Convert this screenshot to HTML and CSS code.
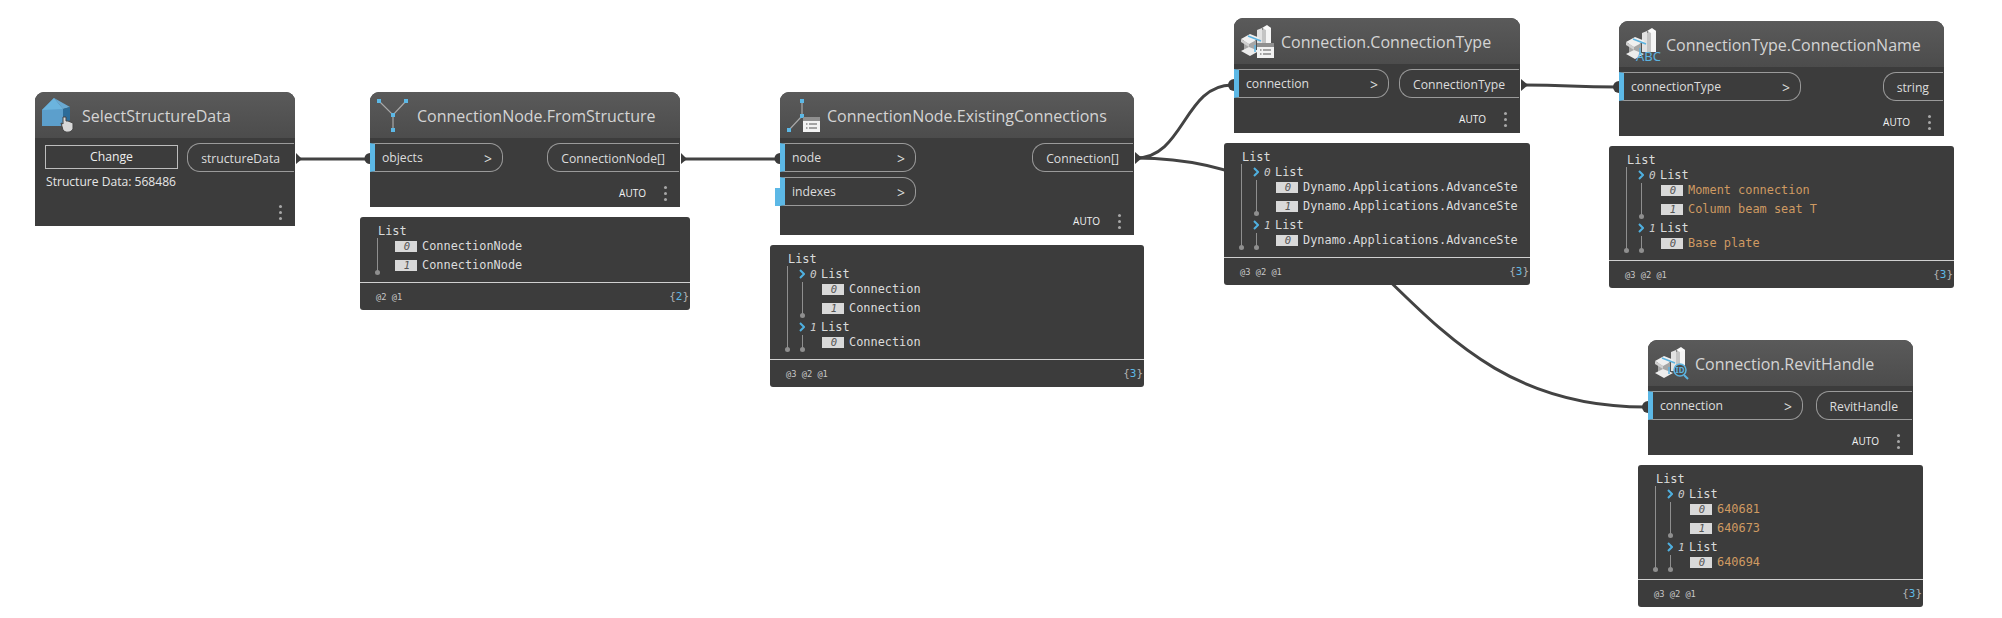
FILE: index.html
```html
<!DOCTYPE html>
<html lang="en">
<head>
    <meta charset="UTF-8">
    <title>Dynamo graph</title>
    <link rel="stylesheet" href="styles.css">
</head>
<body>
<div class="canvas">
    <!-- Shared icon parts -->
    <svg class="defs" width="0" height="0">
        <defs>
            <g id="beam">
                <polygon points="26,13 33,9 33,31 26,31" fill="#c4c4c4"/>
                <polygon points="32,8 37,10 37,31 32,31" fill="#f5f5f5"/>
                <polygon points="23,12 28,10 28,31 23,31" fill="#e2e2e2"/>
                <polygon points="28,10 33,7 37,10 32,12" fill="#fafafa"/>
                <polygon points="10,23 22,23 22,34 10,34" fill="#a6a6a6"/>
                <polygon points="7,21 16,16 26,20 15,26" fill="#f0f0f0"/>
                <polygon points="7,21 15,26 15,29 7,24" fill="#cfcfcf"/>
                <polygon points="7,33 15,29 25,33 16,38" fill="#ececec"/>
                <path d="M14 18 L27 23" stroke="#5cb3e0" stroke-width="1.5" fill="none"/>
                <path d="M21 27 L21 34" stroke="#5cb3e0" stroke-width="1.5" fill="none"/>
            </g>
            <g id="card">
                <rect x="0" y="0" width="17" height="15" fill="#f2f2f2"/>
                <rect x="0" y="0" width="17" height="4" fill="#8f8f8f"/>
                <path d="M3 7 h1.5 M6 7 h8 M3 11 h1.5 M6 11 h8" stroke="#555" stroke-width="1"/>
            </g>
        </defs>
    </svg>

    <!-- Wires sit behind the nodes -->
    <svg class="wires" width="2002" height="618" viewBox="0 0 2002 618">
        <g fill="none" stroke="#434343" stroke-width="3">
            <path d="M297 159 L368 159"/>
            <path d="M682 159 L778 159"/>
            <path d="M1136 158 C1184 158 1184 85 1232 85"/>
            <path d="M1136 158 C1391 158 1391 407 1646 407"/>
            <path d="M1522 85 C1570 85 1570 87 1617 87"/>
        </g>
        <g fill="#3c3c3c">
            <path d="M296 153 L302 159 L296 164 Z"/>
            <path d="M681 153 L687 159 L681 164 Z"/>
            <path d="M1135 152 L1142 158 L1135 164 Z"/>
            <path d="M1521 79 L1528 85 L1521 91 Z"/>
            <path d="M370 153 A5.5 5.5 0 0 0 370 164 Z"/>
            <path d="M780 153 A5.5 5.5 0 0 0 780 164 Z"/>
            <path d="M1234 79 A5.5 5.5 0 0 0 1234 91 Z"/>
            <path d="M1619 81 A5.5 5.5 0 0 0 1619 93 Z"/>
            <path d="M1648 401 A5.5 5.5 0 0 0 1648 413 Z"/>
        </g>
    </svg>

    <section class="node node-select">
        <header class="node-head">
            <svg class="node-icon" viewBox="0 0 47 46">
                <polygon points="7,18 19,6 28,17 28,34 7,34" fill="#5c9fcc"/>
                <polygon points="7,18 19,6 28,17" fill="#6bb4de"/>
                <polygon points="19,6 35,15 28,17" fill="#69a9d2"/>
                <polygon points="28,17 35,15 35,28 28,34" fill="#2c6c99"/>
                <path d="M28 25 L28 32 L26 31 L28 38 C30 41 36 41 38 37 L38 31 L33 29 L31 29 L31 25 Z" fill="#d8d8d8" stroke="#444" stroke-width="1"/>
            </svg>
            <h2 class="node-title">SelectStructureData</h2>
        </header>
        <div class="node-body">
            <div class="select-controls">
                <div class="change-btn">Change</div>
                <div class="select-status">Structure Data: 568486</div>
            </div>
            <div class="port-out">structureData</div>
        </div>
        <footer class="node-foot"><span class="dots"></span></footer>
    </section>

    <section class="node node-from">
        <header class="node-head">
            <svg class="node-icon" viewBox="0 0 47 46">
                <path d="M9 9 L23 23 L36 9 M23 23 L23 38" stroke="#a8a8a8" stroke-width="1.2" fill="none"/>
                <rect x="7" y="7" width="4" height="4" fill="#5cb8e6"/>
                <rect x="34" y="7" width="4" height="4" fill="#5cb8e6"/>
                <rect x="21" y="21" width="4" height="4" fill="#5cb8e6"/>
                <rect x="21" y="36" width="4" height="4" fill="#5cb8e6"/>
            </svg>
            <h2 class="node-title">ConnectionNode.FromStructure</h2>
        </header>
        <div class="node-body">
            <div class="inputs">
                <div class="port-in"><span>objects</span><b>&gt;</b></div>
            </div>
            <div class="port-out">ConnectionNode[]</div>
        </div>
        <footer class="node-foot"><span class="auto">AUTO</span><span class="dots"></span></footer>
    </section>

    <div class="preview preview-from">
        <div class="tree">
            <div class="tree-head">List</div>
            <div class="item"><span class="badge">0</span>ConnectionNode</div>
            <div class="item"><span class="badge">1</span>ConnectionNode</div>
        </div>
        <div class="preview-foot"><span>@2 @1</span><span class="count">{<i>2</i>}</span></div>
    </div>

    <section class="node node-existing">
        <header class="node-head">
            <svg class="node-icon" viewBox="0 0 47 46">
                <path d="M22 9 L22 24 L9 38" stroke="#a8a8a8" stroke-width="1.2" fill="none"/>
                <rect x="20" y="7" width="4" height="4" fill="#5cb8e6"/>
                <rect x="20" y="22" width="4" height="4" fill="#5cb8e6"/>
                <rect x="7" y="36" width="4" height="4" fill="#5cb8e6"/>
                <use href="#card" x="23" y="25"/>
            </svg>
            <h2 class="node-title">ConnectionNode.ExistingConnections</h2>
        </header>
        <div class="node-body">
            <div class="inputs">
                <div class="port-in"><span>node</span><b>&gt;</b></div>
                <div class="port-in port-default"><span>indexes</span><b>&gt;</b></div>
            </div>
            <div class="port-out">Connection[]</div>
        </div>
        <footer class="node-foot"><span class="auto">AUTO</span><span class="dots"></span></footer>
    </section>

    <div class="preview preview-existing">
        <div class="tree">
            <div class="tree-head">List</div>
            <div class="sublist">
                <div class="sub-head"><svg class="chevron" viewBox="0 0 6 10"><path d="M1 1 L5 5 L1 9" /></svg><em>0</em>List</div>
                <div class="item"><span class="badge">0</span>Connection</div>
                <div class="item"><span class="badge">1</span>Connection</div>
            </div>
            <div class="sublist">
                <div class="sub-head"><svg class="chevron" viewBox="0 0 6 10"><path d="M1 1 L5 5 L1 9" /></svg><em>1</em>List</div>
                <div class="item"><span class="badge">0</span>Connection</div>
            </div>
        </div>
        <div class="preview-foot"><span>@3 @2 @1</span><span class="count">{<i>3</i>}</span></div>
    </div>

    <section class="node node-type">
        <header class="node-head">
            <svg class="node-icon" viewBox="0 0 47 46">
                <use href="#beam"/>
                <use href="#card" x="23" y="25"/>
            </svg>
            <h2 class="node-title">Connection.ConnectionType</h2>
        </header>
        <div class="node-body">
            <div class="inputs">
                <div class="port-in"><span>connection</span><b>&gt;</b></div>
            </div>
            <div class="port-out">ConnectionType</div>
        </div>
        <footer class="node-foot"><span class="auto">AUTO</span><span class="dots"></span></footer>
    </section>

    <div class="preview preview-type">
        <div class="tree">
            <div class="tree-head">List</div>
            <div class="sublist">
                <div class="sub-head"><svg class="chevron" viewBox="0 0 6 10"><path d="M1 1 L5 5 L1 9" /></svg><em>0</em>List</div>
                <div class="item"><span class="badge">0</span>Dynamo.Applications.AdvanceSte</div>
                <div class="item"><span class="badge">1</span>Dynamo.Applications.AdvanceSte</div>
            </div>
            <div class="sublist">
                <div class="sub-head"><svg class="chevron" viewBox="0 0 6 10"><path d="M1 1 L5 5 L1 9" /></svg><em>1</em>List</div>
                <div class="item"><span class="badge">0</span>Dynamo.Applications.AdvanceSte</div>
            </div>
        </div>
        <div class="preview-foot"><span>@3 @2 @1</span><span class="count">{<i>3</i>}</span></div>
    </div>

    <section class="node node-name">
        <header class="node-head">
            <svg class="node-icon" viewBox="0 0 47 46">
                <use href="#beam"/>
                <text class="icon-abc" x="17" y="40">ABC</text>
            </svg>
            <h2 class="node-title">ConnectionType.ConnectionName</h2>
        </header>
        <div class="node-body">
            <div class="inputs">
                <div class="port-in"><span>connectionType</span><b>&gt;</b></div>
            </div>
            <div class="port-out">string</div>
        </div>
        <footer class="node-foot"><span class="auto">AUTO</span><span class="dots"></span></footer>
    </section>

    <div class="preview preview-name">
        <div class="tree">
            <div class="tree-head">List</div>
            <div class="sublist">
                <div class="sub-head"><svg class="chevron" viewBox="0 0 6 10"><path d="M1 1 L5 5 L1 9" /></svg><em>0</em>List</div>
                <div class="item value"><span class="badge">0</span>Moment connection</div>
                <div class="item value"><span class="badge">1</span>Column beam seat T</div>
            </div>
            <div class="sublist">
                <div class="sub-head"><svg class="chevron" viewBox="0 0 6 10"><path d="M1 1 L5 5 L1 9" /></svg><em>1</em>List</div>
                <div class="item value"><span class="badge">0</span>Base plate</div>
            </div>
        </div>
        <div class="preview-foot"><span>@3 @2 @1</span><span class="count">{<i>3</i>}</span></div>
    </div>

    <section class="node node-handle">
        <header class="node-head">
            <svg class="node-icon" viewBox="0 0 47 46">
                <use href="#beam"/>
                <circle cx="32" cy="30" r="6" fill="#4c4c4c" stroke="#5cb3e0" stroke-width="1.5"/>
                <path d="M36 35 L40 39" stroke="#5cb3e0" stroke-width="2"/>
                <text class="icon-id" x="32" y="33">ID</text>
            </svg>
            <h2 class="node-title">Connection.RevitHandle</h2>
        </header>
        <div class="node-body">
            <div class="inputs">
                <div class="port-in"><span>connection</span><b>&gt;</b></div>
            </div>
            <div class="port-out">RevitHandle</div>
        </div>
        <footer class="node-foot"><span class="auto">AUTO</span><span class="dots"></span></footer>
    </section>

    <div class="preview preview-handle">
        <div class="tree">
            <div class="tree-head">List</div>
            <div class="sublist">
                <div class="sub-head"><svg class="chevron" viewBox="0 0 6 10"><path d="M1 1 L5 5 L1 9" /></svg><em>0</em>List</div>
                <div class="item value"><span class="badge">0</span>640681</div>
                <div class="item value"><span class="badge">1</span>640673</div>
            </div>
            <div class="sublist">
                <div class="sub-head"><svg class="chevron" viewBox="0 0 6 10"><path d="M1 1 L5 5 L1 9" /></svg><em>1</em>List</div>
                <div class="item value"><span class="badge">0</span>640694</div>
            </div>
        </div>
        <div class="preview-foot"><span>@3 @2 @1</span><span class="count">{<i>3</i>}</span></div>
    </div>
</div>
</body>
</html>
```

FILE: styles.css
```css
* {
    box-sizing: border-box;
}
html, body {
    margin: 0;
    background: #fff;
}
.canvas {
    position: relative;
    width: 2002px;
    height: 618px;
    overflow: hidden;
    font-family: "Open Sans", "Noto Sans", sans-serif;
}
.defs, .wires {
    position: absolute;
    left: 0;
    top: 0;
}

/* Nodes are placed on the free canvas */
.node {
    position: absolute;
    display: flex;
    flex-direction: column;
    background: #3c3c3c;
    border-radius: 9px 9px 0 0;
    color: #ddd;
}
.node-select   { left: 35px;   top: 92px;  width: 260px; height: 134px; }
.node-from     { left: 370px;  top: 92px;  width: 310px; height: 115px; }
.node-existing { left: 780px;  top: 92px;  width: 354px; height: 143px; }
.node-type     { left: 1234px; top: 18px;  width: 286px; height: 115px; }
.node-name     { left: 1619px; top: 21px;  width: 325px; height: 115px; }
.node-handle   { left: 1648px; top: 340px; width: 265px; height: 115px; }

.node-from .port-in     { width: 133px; }
.node-existing .port-in { width: 136px; }
.node-type .port-in     { width: 155px; }
.node-name .port-in     { width: 182px; }
.node-handle .port-in   { width: 155px; }

.node-head {
    display: flex;
    align-items: center;
    height: 46px;
    flex: none;
    background: linear-gradient(#5a5a5a, #4c4c4c);
    border-radius: 9px 9px 0 0;
}
.node-icon {
    width: 47px;
    height: 46px;
    flex: none;
}
.node-title {
    margin: 0;
    padding-top: 2px;
    font-size: 16px;
    font-weight: 400;
    color: #d4d4d4;
    white-space: nowrap;
}
.icon-abc {
    font-family: "Noto Sans", sans-serif;
    font-size: 13px;
    fill: #5cb3e0;
}
.icon-id {
    font-family: "Noto Sans", sans-serif;
    font-size: 8px;
    font-weight: 700;
    fill: #5cb3e0;
    text-anchor: middle;
}

.node-body {
    display: flex;
    justify-content: space-between;
    align-items: flex-start;
    padding: 5px 1px 0 0;
    font-size: 12.2px;
}
.inputs {
    display: flex;
    flex-direction: column;
    gap: 5px;
}
.port-in {
    position: relative;
    display: flex;
    justify-content: space-between;
    align-items: center;
    height: 29px;
    padding: 0 10px 0 7px;
    border: 1px solid #9a9a9a;
    border-left: 5px solid #5cb8e6;
    border-radius: 0 13px 13px 0;
}
.port-in b {
    font-weight: 400;
    font-size: 14px;
    padding-top: 2px;
}
.port-default::before {
    content: "";
    position: absolute;
    left: -10px;
    bottom: -1px;
    width: 5px;
    height: 18px;
    background: #5cb8e6;
}
.port-out {
    display: flex;
    align-items: center;
    height: 29px;
    padding: 1px 14px 0 13px;
    border: 1px solid #9a9a9a;
    border-right: none;
    border-radius: 13px 0 0 13px;
    white-space: nowrap;
}
.node-foot {
    display: flex;
    justify-content: flex-end;
    align-items: center;
    gap: 18px;
    height: 28px;
    margin-top: auto;
    padding-right: 13px;
    flex: none;
}
.auto {
    font-size: 10px;
    color: #f2f2f2;
}
.dots {
    width: 3px;
    height: 3px;
    border-radius: 50%;
    background: #a8a8a8;
    box-shadow: 0 -6px 0 #a8a8a8, 0 6px 0 #a8a8a8;
}

/* Node 1 controls */
.select-controls {
    padding: 2px 0 0 10px;
}
.change-btn {
    width: 133px;
    height: 24px;
    line-height: 22px;
    text-align: center;
    border: 1px solid #bdbdbd;
    color: #eee;
}
.select-status {
    margin-top: 4px;
    padding-left: 1px;
    font-size: 12.1px;
    color: #e6e6e6;
    white-space: nowrap;
}

/* Watch previews under the nodes */
.preview {
    position: absolute;
    display: flex;
    flex-direction: column;
    background: #3c3c3c;
    border-radius: 3px;
    color: #dcdcdc;
    font-family: "DejaVu Sans Mono", "Liberation Mono", monospace;
    font-size: 11.9px;
}
.preview-from     { left: 360px;  top: 217px; width: 330px; height: 93px; }
.preview-existing { left: 770px;  top: 245px; width: 374px; height: 142px; }
.preview-type     { left: 1224px; top: 143px; width: 306px; height: 142px; }
.preview-name     { left: 1609px; top: 146px; width: 345px; height: 142px; }
.preview-handle   { left: 1638px; top: 465px; width: 285px; height: 142px; }

.tree {
    position: relative;
    flex: 1;
    padding: 6.5px 0 0 18px;
    white-space: nowrap;
}
.tree::before, .sublist::before {
    content: "";
    position: absolute;
    left: 17px;
    top: 21px;
    bottom: 9px;
    width: 1px;
    background: #8f8f8f;
}
.tree::after, .sublist::after {
    content: "";
    position: absolute;
    left: 15px;
    bottom: 7px;
    width: 5px;
    height: 5px;
    border-radius: 50%;
    background: #8f8f8f;
}
.tree-head, .sub-head, .item {
    display: flex;
    align-items: center;
    height: 15px;
}
.item {
    margin-left: 17px;
}
.item + .item {
    margin-top: 4px;
}
.value {
    color: #cf9a62;
}
.badge {
    width: 22px;
    height: 11px;
    margin-right: 5px;
    padding-left: 2px;
    background: #d9d9d9;
    color: #555;
    font-size: 10.5px;
    font-style: italic;
    line-height: 11px;
    text-align: center;
}
.sublist {
    position: relative;
}
.sublist + .sublist {
    margin-top: 4px;
}
.sublist .item {
    margin-left: 34px;
}
.sublist::before {
    left: 14px;
    top: 15px;
    bottom: 0;
}
.sublist::after {
    left: 12px;
    bottom: -2px;
}
.chevron {
    width: 6px;
    height: 10px;
    margin-left: 11px;
    fill: none;
    stroke: #4fb0e0;
    stroke-width: 2;
}
.sub-head em {
    width: 16px;
    padding-left: 5px;
    font-size: 11px;
    color: #ccc;
}
.preview-foot {
    display: flex;
    justify-content: space-between;
    align-items: center;
    height: 28px;
    flex: none;
    padding: 0 1px 0 16px;
    border-top: 1px solid #d0d0d0;
    font-size: 8.7px;
    color: #c8c8c8;
}
.count {
    font-size: 11px;
    color: #b0b0b0;
}
.count i {
    font-style: normal;
    color: #5cb8e6;
}
```
